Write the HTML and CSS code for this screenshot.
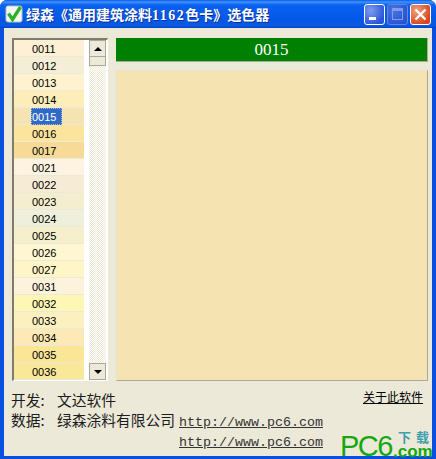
FILE: index.html
```html
<!DOCTYPE html>
<html lang="zh-CN">
<head>
    <meta charset="UTF-8">
    <title>绿森《通用建筑涂料1162色卡》选色器</title>
    <link rel="stylesheet" href="styles.css">
</head>
<body>
    <div class="window">
        <div class="titlebar">
            <svg class="app-icon" width="18" height="18" viewBox="0 0 18 18">
                <rect x="1" y="1" width="16" height="16" rx="2" fill="#f4f8f0" stroke="#b8c8b0"/>
                <path d="M3.5 8.5 L7.5 14.5 L15.5 2" fill="none" stroke="#2fae2f" stroke-width="3.4"/>
            </svg>
            <span class="title">绿森《通用建筑涂料<span class="title-num">1162</span>色卡》选色器</span>
            <div class="controls">
                <button class="ctl ctl-min"><span class="min-bar"></span></button>
                <button class="ctl ctl-max"><span class="max-box"></span></button>
                <button class="ctl ctl-close">
                    <svg width="15" height="15" viewBox="0 0 15 15"><path d="M2.5 2.5 L12.5 12.5 M12.5 2.5 L2.5 12.5" stroke="#fff" stroke-width="2.4"/></svg>
                </button>
            </div>
        </div>
        <div class="client">
            <div class="main">
                <div class="listbox">
                    <ul class="colors">
                        <li style="background:#fdf0d5">0011</li>
                        <li style="background:#f5eed6">0012</li>
                        <li style="background:#fff3cf">0013</li>
                        <li style="background:#fdeeb9">0014</li>
                        <li class="selected" style="background:#f5e3b2"><span>0015</span></li>
                        <li style="background:#fde49c">0016</li>
                        <li style="background:#f7da98">0017</li>
                        <li style="background:#fef3e1">0021</li>
                        <li style="background:#f6ecd6">0022</li>
                        <li style="background:#f5edcf">0023</li>
                        <li style="background:#eef0db">0024</li>
                        <li style="background:#f5efcc">0025</li>
                        <li style="background:#fff7d2">0026</li>
                        <li style="background:#fff5c6">0027</li>
                        <li style="background:#fdf3dc">0031</li>
                        <li style="background:#fef6b5">0032</li>
                        <li style="background:#fdf0c0">0033</li>
                        <li style="background:#fde9b5">0034</li>
                        <li style="background:#fbe597">0035</li>
                        <li style="background:#f8e898">0036</li>
                    </ul>
                    <div class="scrollbar">
                        <div class="sb-btn"><i class="arrow-up"></i></div>
                        <div class="sb-thumb"></div>
                        <div class="sb-track"></div>
                        <div class="sb-btn"><i class="arrow-down"></i></div>
                    </div>
                </div>
                <div class="preview">
                    <div class="code">0015</div>
                    <div class="swatch"></div>
                </div>
            </div>
            <div class="info">
                <div class="credits">
                    <div class="credit-row"><span class="credit-label">开发:</span>文达软件</div>
                    <div class="credit-row"><span class="credit-label">数据:</span>绿森涂料有限公司<a class="url" href="#">http://www.pc6.com</a></div>
                    <div class="credit-row url-row"><a class="url" href="#">http://www.pc6.com</a></div>
                </div>
                <a class="about" href="#">关于此软件</a>
            </div>
        </div>
    </div>
    <div class="logo">
        <span class="logo-pc">PC6</span>
        <span class="logo-side">
            <span class="logo-cn">下载</span>
            <span class="logo-com">.com</span>
        </span>
    </div>
</body>
</html>
```

FILE: styles.css
```css
html, body {
    margin: 0;
    padding: 0;
}
body {
    width: 436px;
    height: 459px;
    overflow: hidden;
    position: relative;
    font-family: "Noto Sans CJK SC", sans-serif;
}
.window {
    height: 459px;
    box-sizing: border-box;
    display: flex;
    flex-direction: column;
    background-color: #0a4fe0;
    border-radius: 7px 7px 0 0;
}
.titlebar {
    height: 28px;
    flex: none;
    display: flex;
    align-items: center;
    padding: 0 5px;
    border-radius: 7px 7px 0 0;
    background: linear-gradient(#0a5ae8 0, #3f93fb 2px, #0a60f0 5px, #0558e6 20px, #0a58e0 26px, #0443c8 28px);
}
.app-icon {
    margin-right: 3px;
    flex: none;
}
.title {
    color: #fff;
    font-size: 14px;
    font-weight: bold;
    white-space: nowrap;
    text-shadow: 1px 1px 0 #0a2f9c;
}
.title-num {
    font-family: "Liberation Serif", serif;
    letter-spacing: 1.5px;
}
.controls {
    margin-left: auto;
    display: flex;
    gap: 2px;
}
.ctl {
    width: 21px;
    height: 21px;
    padding: 0;
    border: 1px solid #fff;
    border-radius: 3px;
    display: flex;
    align-items: center;
    justify-content: center;
    position: relative;
    background: radial-gradient(circle at 30% 30%, #7d9df0, #2a55d8 75%);
}
.ctl-max {
    border-color: #5f86e8;
    background: radial-gradient(circle at 30% 30%, #4a72e0, #2a55d0 75%);
}
.ctl-close {
    background: radial-gradient(circle at 30% 30%, #f0a080, #d8461e 75%);
}
.min-bar {
    position: absolute;
    left: 4px;
    bottom: 4px;
    width: 7px;
    height: 3px;
    background-color: #fff;
}
.max-box {
    width: 9px;
    height: 8px;
    border: 1px solid #7f9cea;
    border-top-width: 3px;
}
.client {
    flex: 1;
    margin: 0 4px 3px;
    background-color: #ece9d8;
    display: flex;
    flex-direction: column;
    min-height: 0;
}
.main {
    display: flex;
    padding: 10px 4px 0 8px;
    height: 353px;
    box-sizing: border-box;
    flex: none;
}
.listbox {
    width: 96px;
    height: 343px;
    box-sizing: border-box;
    display: flex;
    border-top: 2px solid #7f7b6e;
    border-left: 2px solid #7f7b6e;
    border-right: 1px solid #fff;
    border-bottom: 1px solid #fff;
    background-color: #fff;
    margin-right: 8px;
    flex: none;
}
.colors {
    list-style: none;
    margin: 0 5px 0 0;
    padding: 0;
    width: 70px;
    flex: none;
}
.colors li {
    height: 17px;
    box-sizing: border-box;
    border-bottom: 1px solid #ece9d8;
    padding-left: 18px;
    font: 11px/18px "Liberation Sans", sans-serif;
    color: #000;
}
.colors li.selected {
    padding-left: 17px;
}
.colors li.selected span {
    display: block;
    width: 31px;
    height: 17px;
    box-sizing: border-box;
    padding-left: 1px;
    background-color: #316ac5;
    color: #fff;
    outline: 1px dotted #9db8e8;
    outline-offset: -1px;
}
.scrollbar {
    width: 17px;
    flex: none;
    display: flex;
    flex-direction: column;
}
.sb-btn {
    height: 17px;
    flex: none;
    box-sizing: border-box;
    background-color: #ece9d8;
    border: 1px solid #aca899;
    display: flex;
    align-items: center;
    justify-content: center;
}
.arrow-up, .arrow-down {
    width: 0;
    height: 0;
    border-left: 4px solid transparent;
    border-right: 4px solid transparent;
}
.arrow-up {
    border-bottom: 4px solid #000;
}
.arrow-down {
    border-top: 4px solid #000;
}
.sb-thumb {
    height: 9px;
    flex: none;
    box-sizing: border-box;
    background-color: #ece9d8;
    border: 1px solid #aca899;
    border-top: none;
}
.sb-track {
    flex: 1;
    background: repeating-conic-gradient(#fff 0 25%, #ece9d8 0 50%) 0 0 / 2px 2px;
}
.preview {
    flex: 1;
    display: flex;
    flex-direction: column;
    gap: 8px;
}
.code {
    height: 23px;
    flex: none;
    background-color: #008000;
    color: #fff;
    text-align: center;
    font: 17px/23px "Liberation Serif", serif;
    border-right: 1px solid #aca899;
    border-bottom: 1px solid #aca899;
}
.swatch {
    flex: 1;
    background-color: #f5e3b2;
    border: 1px solid #aca899;
    border-left-color: #e6e2d0;
    border-top-color: #e6e2d0;
}
.info {
    flex: 1;
    display: flex;
    justify-content: space-between;
    padding: 9px 9px 0 7px;
    font-size: 14.75px;
    color: #1c1c1c;
}
.credit-row {
    height: 20px;
    line-height: 20px;
    white-space: nowrap;
}
.credit-label {
    display: inline-block;
    width: 46px;
}
.url-row {
    padding-left: 168px;
}
.url {
    font: 13.33px/20px "Liberation Mono", monospace;
    color: #333;
    text-decoration: underline;
    margin-left: 4px;
}
.url-row .url {
    margin-left: 0;
}
.about {
    font-size: 12px;
    line-height: 16px;
    color: #000;
    text-decoration: underline;
    margin-top: -1px;
}
.logo {
    position: absolute;
    right: 0;
    bottom: 0;
    width: 96px;
    height: 30px;
    display: flex;
}
.logo-pc {
    font: 29px/25px "Liberation Sans", sans-serif;
    color: #12a812;
    letter-spacing: -1.5px;
    width: 53px;
    flex: none;
    align-self: flex-end;
}
.logo-side {
    display: flex;
    flex-direction: column;
    padding-top: 1px;
}
.logo-cn {
    font-size: 13px;
    line-height: 14px;
    font-weight: bold;
    letter-spacing: 5px;
    color: #3f9fae;
    margin-left: 5px;
    white-space: nowrap;
}
.logo-com {
    font: bold 17px/11px "Liberation Sans", sans-serif;
    color: #12a812;
    margin-top: 2px;
}
```
